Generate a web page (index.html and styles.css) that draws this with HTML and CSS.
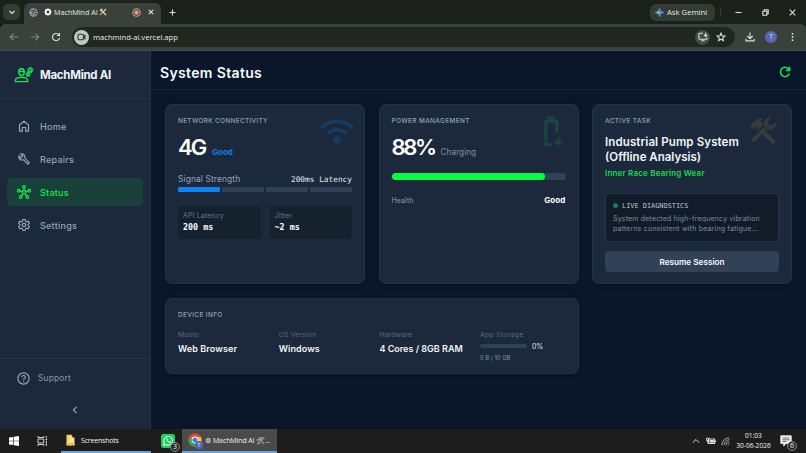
FILE: index.html
```html
<!DOCTYPE html>
<html lang="en">
<head>
    <meta charset="UTF-8">
    <meta name="viewport" content="width=device-width, initial-scale=1">
    <title>MachMind AI</title>
    <link rel="stylesheet" href="styles.css">
</head>
<body>
    <!-- Browser window -->
    <div class="tabs">
        <div class="tab-search"><svg width="8" height="8" viewBox="0 0 8 8"><path d="M1.5 3 4 5.4 6.5 3"/></svg></div>
        <div class="tab">
            <svg class="globe" width="9" height="9" viewBox="0 0 9 9"><circle cx="4.5" cy="4.5" r="4.2" fill="#9aa4ad"/><path d="M1 3.2 3.8 2.3 4.6 4 3 5.5 3.2 7.6M5.6 1 5.2 2.6 8 4M5.5 7.6 6 5.6 8 5.5" fill="none" stroke="#464c48"/></svg>
            <svg class="mark" width="8" height="8" viewBox="0 0 8 8"><circle cx="4" cy="4" r="2.3" fill="none" stroke="#fff" stroke-width="1.7"/><path d="M4 .3v7.4M.3 4h7.4M1.4 1.4l5.2 5.2M6.6 1.4 1.4 6.6" fill="none" stroke="#fff" stroke-width=".9"/><circle cx="4" cy="4" r="1.3" fill="#3a413a"/></svg>
            <span class="tab-title">MachMind AI</span>
            <svg class="tab-tools" width="8" height="8" viewBox="0 0 8 8"><path d="M1 7 5.5 2.5" stroke="#d99a45" stroke-width="1.3"/><path d="m2.2 2.2 4.8 4.8M1 2.8 3.2.8" stroke="#d8dde0" stroke-width="1.3"/><path d="m5 3 2-2" stroke="#e4c15f" stroke-width="1.5"/></svg>
            <svg class="rec" width="9" height="9" viewBox="0 0 9 9"><circle cx="4.5" cy="4.5" r="3.7" fill="none" stroke="#df9487"/><circle cx="4.5" cy="4.5" r="2.2" fill="#e59b8d" stroke="none"/></svg>
            <svg class="tab-close" width="6" height="6" viewBox="0 0 6 6"><path d="m.8.8 4.4 4.4M5.2.8.8 5.2"/></svg>
        </div>
        <svg class="new-tab" width="7" height="7" viewBox="0 0 7 7"><path d="M3.5.5v6M.5 3.5h6"/></svg>
        <div class="gemini">
            <svg width="9" height="9" viewBox="0 0 9 9"><path d="M4.5 0Q5 4 9 4.5 5 5 4.5 9 4 5 0 4.5 4 4 4.5 0" fill="#3c9cf0" stroke="#3c9cf0" stroke-width=".6"/><path d="M4.5 0Q5 3.2 6.5 3.8L4 4.2Q4.4 2 4.5 0" fill="#e8584b"/><path d="M0 4.5Q3 4.3 4 3.6L4.3 5.2Q2 5 0 4.5" fill="#dcb948"/></svg>
            <span>Ask Gemini</span>
        </div>
        <div class="window-buttons">
            <svg width="7" height="7" viewBox="0 0 7 7"><path d="M.5 3.5h6"/></svg>
            <svg width="7" height="7" viewBox="0 0 7 7"><path d="M.8 2.2h4v4h-4zM2.2 2.2V.8h4v4H4.8"/></svg>
            <svg width="7" height="7" viewBox="0 0 7 7"><path d="m.7.7 5.6 5.6M6.3.7.7 6.3"/></svg>
        </div>
    </div>
    <div class="toolbar">
        <div class="toolbar-nav">
            <svg class="dim" width="10" height="10" viewBox="0 0 10 10"><path d="M9 5H1.3M4.6 1.6 1.2 5l3.4 3.4"/></svg>
            <svg class="dim" width="10" height="10" viewBox="0 0 10 10"><path d="M1 5h7.7M5.4 1.6 8.8 5 5.4 8.4"/></svg>
            <svg width="10" height="10" viewBox="0 0 10 10"><path d="M8 3A3.6 3.6 0 1 0 8.6 5.8M8.5.9v2.6H5.9"/></svg>
        </div>
        <div class="address">
            <div class="site-info"><svg width="9" height="8" viewBox="0 0 9 8"><rect x="1" y="1.3" width="5.4" height="5.4" rx="1"/><path d="M6.5 3.4 8 2.4v3.2L6.5 4.6"/></svg></div>
            <span class="url">machmind-ai.vercel.app</span>
            <div class="install"><svg width="10" height="10" viewBox="0 0 10 10"><path d="M5 1.2H1.6a.7.7 0 0 0-.7.7v4.7c0 .4.3.7.7.7h6.8c.4 0 .7-.3.7-.7V5.4M3.3 8.8h3.4M7.7.7v3.6M6.1 2.9l1.6 1.6 1.6-1.6"/></svg></div>
            <svg class="star" width="10" height="10" viewBox="0 0 10 10"><path d="m5 1.2 1.1 2.6 2.8.2-2.1 1.9.6 2.8L5 7.2 2.6 8.7l.6-2.8L1.1 4l2.8-.2z"/></svg>
        </div>
        <svg class="download" width="10" height="10" viewBox="0 0 10 10"><path d="M5 .5v6M2.3 4 5 6.7 7.7 4M.9 6.7v2.2h8.2V6.7"/></svg>
        <span class="avatar">T</span>
        <svg class="dots" width="3" height="10" viewBox="0 0 3 10"><circle cx="1.5" cy="1.8" r=".9"/><circle cx="1.5" cy="5" r=".9"/><circle cx="1.5" cy="8.2" r=".9"/></svg>
    </div>

    <!-- MachMind app -->
    <div class="app">
        <aside class="sidebar">
            <div class="brand">
                <svg width="20" height="16" viewBox="0 0 20 16"><path d="M1.4 14.6v-1.4c0-1.3 1-1.9 2.2-2.3 2.2-.8 5.6-.8 7.8 0 1.2.4 2.2 1 2.2 2.3v1.4zM4.8 4.6v1a2.7 2.7 0 0 0 5.4 0v-1M4 4.5h7M4.9 4.3c0-1.3.7-2.3 1.6-2.5v1.3M10.1 4.3c0-1.3-.7-2.3-1.6-2.5v1.3M6.5 1.6h2"/><circle cx="16.3" cy="3.2" r="1.6"/><circle cx="14" cy="7.4" r="1.2"/><path stroke-dasharray="1 1.1" d="M16.3.6a2.6 2.6 0 1 1 0 5.2 2.6 2.6 0 0 1 0-5.2M14 5.3a2.1 2.1 0 1 1 0 4.2 2.1 2.1 0 0 1 0-4.2"/></svg>
                <span>MachMind AI</span>
            </div>
            <nav class="menu">
                <a class="menu-item">
                    <svg width="14" height="14" viewBox="0 0 14 14"><path d="M2.5 5.7 7 2.2l4.5 3.5v6.5H8.7V8.5H5.3v3.7H2.5z"/></svg>
                    <span>Home</span>
                </a>
                <a class="menu-item">
                    <svg width="14" height="14" viewBox="0 0 14 14"><path d="m7.9 6.3 4.4 4.4-1.5 1.5-4.5-4.5c-1.4.6-2.7.2-3.6-.7-.9-.9-1.1-2.1-.7-3.2l2 2 1.7-1.7-2-2c1.2-.4 2.5-.2 3.4.7.9 1 1.2 2.2.8 3.5z"/></svg>
                    <span>Repairs</span>
                </a>
                <a class="menu-item active">
                    <svg width="14" height="14" viewBox="0 0 14 14"><circle cx="7" cy="7.2" r="1.9"/><circle cx="7" cy="1.9" r="1.3"/><circle cx="1.7" cy="5.7" r="1.3"/><circle cx="12.3" cy="5.7" r="1.3"/><circle cx="3.7" cy="12" r="1.3"/><circle cx="10.3" cy="12" r="1.3"/><path d="M7 3.2v2.1M3 6l2.1.6M11 6l-2.1.6M4.5 11l1.3-2.1M9.5 11 8.2 8.9"/></svg>
                    <span>Status</span>
                </a>
                <a class="menu-item">
                    <svg width="14" height="14" viewBox="0 0 14 14"><path d="M5.9 1.5h2.2l.4 1.7 1.1.7 1.7-.6 1.1 1.9-1.3 1.2v1.2l1.3 1.2-1.1 1.9-1.7-.6-1.1.7-.4 1.7H5.9l-.4-1.7-1.1-.7-1.7.6-1.1-1.9 1.3-1.2V6.4L1.6 5.2l1.1-1.9 1.7.6 1.1-.7z"/><circle cx="7" cy="7" r="1.7"/></svg>
                    <span>Settings</span>
                </a>
            </nav>
            <div class="sidebar-bottom">
                <a class="support">
                    <svg width="13" height="13" viewBox="0 0 13 13"><circle cx="6.5" cy="6.5" r="5.6"/><path d="M4.9 5.2c0-1.1.7-1.7 1.7-1.7s1.7.6 1.7 1.5c0 1.3-1.7 1.4-1.7 2.8M6.6 8.8V10"/></svg>
                    <span>Support</span>
                </a>
                <svg class="collapse" width="8" height="8" viewBox="0 0 8 8"><path d="M5.6.8 2.4 4l3.2 3.2"/></svg>
            </div>
        </aside>

        <main class="main">
            <header class="page-header">
                <h1>System Status</h1>
                <svg width="12" height="12" viewBox="0 0 12 12"><path d="M9.8 3.2A4.6 4.6 0 1 0 10.4 7.4M10.6.7v3.7H6.9"/></svg>
            </header>
            <div class="cards">
                <section class="card">
                    <svg class="bg-icon wifi" width="36" height="27" viewBox="0 0 36 27"><path d="M2.2 9.8C11.5 1 24.5 1 33.8 9.8M8.5 15.8c5.6-5.2 13.4-5.2 19 0" fill="none" stroke="#163b62" stroke-width="3.6"/><circle cx="18" cy="22.2" r="3.8" fill="#163b62"/></svg>
                    <h2 class="network">NETWORK CONNECTIVITY</h2>
                    <div class="value"><b>4G</b><span class="good">Good</span></div>
                    <div class="signal-label"><span>Signal Strength</span><code>200ms Latency</code></div>
                    <div class="signal"><i class="on"></i><i></i><i></i><i></i></div>
                    <div class="metrics">
                        <div class="metric"><span>API Latency</span><code>200 ms</code></div>
                        <div class="metric"><span>Jitter</span><code>~2 ms</code></div>
                    </div>
                </section>

                <section class="card">
                    <svg class="bg-icon battery" width="22" height="32" viewBox="0 0 22 32"><path d="M9.3 28.4H3.8V5.5h11v11M6.8 5V2.2h5V5" fill="none" stroke="#19463f" stroke-width="3.2"/><path d="m18 20-7 7.2h4L14 32l7.2-7.2h-4z" fill="#19463f"/></svg>
                    <h2>POWER MANAGEMENT</h2>
                    <div class="value"><b class="percent">88%</b><span class="charging">Charging</span></div>
                    <div class="charge"><i style="width: 88%"></i></div>
                    <div class="health"><span>Health</span><b>Good</b></div>
                </section>

                <section class="card">
                    <svg class="bg-icon tools" width="28" height="28" viewBox="0 0 28 28"><g fill="#393a3b"><path d="m12.4 11.2 13.9 13.3-3.4 3.1L9 13.9zM0 9.2 7.4 1.8h5.2L10.2 4.2l3.4 3.3-5.4 5.4L5 9.6l-2.4 2.3z"/><path d="m14.4 10.1 2.3 2.5L4 25.4.9 22.3z"/><path d="M13.9 8.3c-.8-4.6 2.2-8 7.4-7.7L17.8 4.4l.8 3.4 3.5.8 4-3.7c.7 5.5-3.8 9-8.2 7.5z"/></g></svg>
                    <h2>ACTIVE TASK</h2>
                    <h3>Industrial Pump System<br><span>(Offline Analysis)</span></h3>
                    <p class="fault">Inner Race Bearing Wear</p>
                    <div class="diagnostics">
                        <code><i></i>LIVE DIAGNOSTICS</code>
                        <p>System detected high-frequency vibration<br>patterns consistent with bearing fatigue...</p>
                    </div>
                    <div class="resume">Resume Session</div>
                </section>

                <section class="card device">
                    <h2>DEVICE INFO</h2>
                    <div class="device-grid">
                        <div><span class="label">Model</span><b>Web Browser</b></div>
                        <div><span class="label">OS Version</span><b>Windows</b></div>
                        <div><span class="label">Hardware</span><b class="cores">4 Cores / 8GB RAM</b></div>
                        <div>
                            <span class="label wide">App Storage</span>
                            <div class="storage"><i></i><span>0%</span></div>
                            <small>0 B / 10 GB</small>
                        </div>
                    </div>
                </section>
            </div>
        </main>
    </div>

    <!-- Windows taskbar -->
    <footer class="taskbar">
        <svg class="start" width="10" height="10" viewBox="0 0 10 10" fill="#fff"><path d="m0 1.5 4.3-.6v3.8H0zM4.9.8 10 0v4.7H4.9zM0 5.3h4.3v3.8L0 8.5zM4.9 5.3H10V10l-5.1-.8z"/></svg>
        <svg class="task-view" width="11" height="10" viewBox="0 0 11 10"><path d="M1 0v1.5h5.7V0M1 3h5.7v4H1zM1 10V8.5h5.7V10M9.3 0v2M9.3 4.8V10"/><path d="M8.5 3.4h1.6" stroke-width="1.6"/></svg>
        <div class="task folder">
            <svg width="9" height="12" viewBox="0 0 9 12"><path d="M.5.8h5l1 2v8.4h-6z" fill="#f5d272"/><path d="M4.3 3.4h4.2v7.8H1.8z" fill="#fbe59c"/><path d="M.5 8.8h8v2.6h-8z" fill="#edbd50"/></svg>
            <span>Screenshots</span>
        </div>
        <div class="whatsapp">
            <svg width="14" height="14" viewBox="0 0 14 14"><rect width="14" height="14" rx="2.5" fill="#20cf5b"/><path d="m2.6 11.4.7-2.5a4.4 4.4 0 1 1 1.8 1.8z" fill="none" stroke="#fff"/><path d="M5.2 4.7c.3 2.2 2 3.9 4.1 4.2l.5-1.1-1.3-.8-.7.6c-.7-.3-1.2-.9-1.5-1.6l.5-.6-.6-1.3z" fill="#fff"/></svg>
            <span class="count">3</span>
        </div>
        <div class="task chrome">
            <div class="chrome-icon">
                <svg width="14" height="14" viewBox="0 0 14 14"><circle cx="7" cy="7" r="6.7" fill="#e94435"/><path d="M1.2 3.7A6.7 6.7 0 0 0 6.3 13.7L9.6 8.4 4 8.2z" fill="#2da94f"/><path d="M7 13.7A6.7 6.7 0 0 0 12.9 4H7l2.8 4.6z" fill="#fbc116"/><circle cx="7" cy="7" r="3.4" fill="#fff"/><circle cx="7" cy="7" r="2.6" fill="#3f7fee"/></svg>
                <span>T</span>
            </div>
            <span class="chrome-title">⚙ MachMind AI 🛠...</span>
        </div>
        <div class="tray">
            <svg width="8" height="8" viewBox="0 0 8 8"><path d="m.8 5.7 3.2-3.2 3.2 3.2"/></svg>
            <svg width="10" height="8" viewBox="0 0 10 8"><rect x="2.6" y="2" width="6" height="4.5"/><path d="M4 3.5h3.6v1.6H4z" fill="#ddd"/><path d="M9.4 3.3v2M.6 1.2h2.2v2.4H.6zM1.7 3.6v2.8"/></svg>
            <svg class="net" width="9" height="9" viewBox="0 0 9 9"><path d="M.8 8.2A7.5 7.5 0 0 1 8.3.8M2.9 8.2a5.4 5.4 0 0 1 5.4-5.4M5 8.2a3.3 3.3 0 0 1 3.3-3.3M7 8.2A1.4 1.4 0 0 1 8.3 7"/></svg>
            <div class="clock"><span>01:03</span><span>30-06-2026</span></div>
            <div class="notes">
                <svg width="12" height="12" viewBox="0 0 12 12"><path d="M.8.8h10.4v7.7H6L3.7 11V8.5H.8z" fill="#f4f4f4"/><path d="M2.5 3h7M2.5 4.8h7M2.5 6.6h4" stroke="#333" stroke-width=".7"/></svg>
                <span class="count">6</span>
            </div>
        </div>
    </footer>
</body>
</html>
```
FILE: styles.css
```css
* {
    box-sizing: border-box;
}
body {
    margin: 0;
    height: 453px;
    overflow: hidden;
    display: flex;
    flex-direction: column;
    font-family: "Open Sans", "Noto Sans", sans-serif;
    font-size: 8px;
    color: #e8eaed;
    background-color: #0a172b;
}
svg {
    display: block;
    flex: none;
}
span {
    white-space: nowrap;
}
h1, h2, h3, p {
    margin: 0;
}

/* Browser */
.tabs {
    height: 24px;
    flex: none;
    display: flex;
    align-items: center;
    background-color: #1b201b;
}
.tabs svg, .toolbar svg {
    fill: none;
    stroke: #dce1dc;
    stroke-width: 1.1;
}
.tabs .globe, .tabs .mark, .gemini svg {
    stroke: none;
}
.tab-search {
    width: 17px;
    height: 16px;
    margin-left: 3px;
    border-radius: 5px;
    display: flex;
    align-items: center;
    justify-content: center;
    background-color: #343a34;
}
.tab {
    width: 137px;
    height: 21px;
    margin: 3px 0 0 4px;
    padding: 0 7px 3px 5px;
    display: flex;
    align-items: center;
    border-radius: 6px 6px 0 0;
    background-color: #3a413a;
}
.mark {
    margin-left: 6px;
}
.tab-title {
    margin-left: 2px;
    width: 43px;
    font-size: 7.2px;
}
.tab-tools {
    margin-left: 2px;
}
.rec {
    margin-left: auto;
}
.tab-close {
    margin-left: 7px;
}
.new-tab {
    margin-left: 8px;
}
.gemini {
    width: 65px;
    height: 17px;
    margin-left: auto;
    padding-left: 5px;
    display: flex;
    align-items: center;
    gap: 3px;
    border-radius: 6px;
    background-color: #343a34;
    font-size: 7.7px;
}
.window-buttons {
    display: flex;
    gap: 20px;
    margin-left: 5px;
    padding: 1px 10px 1px 14px;
    border-left: 1px solid #343a34;
}
.toolbar {
    height: 27px;
    flex: none;
    display: flex;
    align-items: center;
    background-color: #3a413a;
    border-bottom: 1px solid #484e48;
    border-radius: 5px 5px 0 0;
}
.toolbar-nav {
    display: flex;
    gap: 11px;
    padding-left: 9px;
}
.toolbar .dim {
    stroke: #7e857e;
}
.address {
    width: 663px;
    height: 20px;
    margin-left: 11px;
    padding: 0 9px 0 2px;
    display: flex;
    align-items: center;
    border-radius: 10px;
    background-color: #212621;
}
.site-info {
    width: 15px;
    height: 15px;
    border-radius: 50%;
    display: flex;
    align-items: center;
    justify-content: center;
    background-color: #bdcbbd;
}
.site-info svg {
    stroke: #303a30;
}
.url {
    margin-left: 4px;
    font-size: 7.6px;
}
.install {
    width: 15px;
    height: 15px;
    margin-left: auto;
    border-radius: 50%;
    display: flex;
    align-items: center;
    justify-content: center;
    background-color: #454b45;
}
.star {
    margin-left: 6px;
}
.download {
    margin-left: 10px;
}
.avatar {
    width: 12px;
    height: 12px;
    margin-left: 10px;
    border-radius: 50%;
    background-color: #5667b5;
    font-size: 6.5px;
    line-height: 12px;
    text-align: center;
}
.dots {
    margin-left: 14px;
}
.toolbar .dots {
    fill: #dce1dc;
    stroke: none;
}

/* App shell */
.app {
    flex: 1;
    min-height: 0;
    display: flex;
    font-family: Inter, sans-serif;
}
.sidebar {
    width: 151px;
    flex: none;
    display: flex;
    flex-direction: column;
    background-color: #1c293c;
    border-right: 1px solid #223248;
}
.brand {
    height: 48px;
    padding-left: 14px;
    display: flex;
    align-items: center;
    gap: 6px;
    border-bottom: 1px solid #233347;
    font-size: 11.5px;
    font-weight: 700;
    letter-spacing: -0.28px;
    color: #f1f5f9;
}
.brand svg {
    fill: none;
    stroke: #19e453;
    stroke-width: 1.4;
}
.menu {
    padding: 13px 7px;
    display: flex;
    flex-direction: column;
    gap: 5px;
}
.menu-item {
    height: 28px;
    padding-left: 10px;
    display: flex;
    align-items: center;
    gap: 9px;
    border-radius: 5px;
    font-size: 9px;
    font-weight: 500;
    letter-spacing: 0.25px;
    color: #94a3b8;
}
.menu-item svg, .support svg, .collapse {
    fill: none;
    stroke: #94a3b8;
    stroke-width: 1.2;
}
.menu-item.active {
    background-color: #194039;
    color: #10ee4b;
}
.menu-item.active svg {
    stroke: #10ee4b;
}
.sidebar-bottom {
    margin-top: auto;
    height: 71px;
    border-top: 1px solid #26364a;
}
.support {
    height: 38px;
    padding-left: 17px;
    display: flex;
    align-items: center;
    gap: 8px;
    font-size: 8.5px;
    letter-spacing: 0.1px;
    color: #8795aa;
}
.collapse {
    margin: 9px auto 0;
}
.main {
    flex: 1;
    background-color: #0a172b;
}
.page-header {
    height: 39px;
    padding: 4px 15px 0 9px;
    display: flex;
    align-items: center;
    justify-content: space-between;
    border-bottom: 1px solid #16253a;
}
.page-header h1 {
    font-size: 14px;
    font-weight: 600;
    letter-spacing: 0.35px;
    color: #f8fafc;
}
.page-header svg {
    fill: none;
    stroke: #11e34c;
    stroke-width: 1.6;
}

/* Cards */
.cards {
    padding: 14px;
    display: grid;
    grid-template-columns: repeat(3, 200px);
    grid-template-rows: 180px 76px;
    gap: 14px 13.5px;
}
.card {
    position: relative;
    padding: 11px 12px;
    border: 1px solid #223247;
    border-radius: 7px;
    background-color: #1c293c;
    box-shadow: 0 2px 4px rgba(0, 0, 0, 0.15);
}
.card h2 {
    height: 10px;
    font-size: 6.4px;
    line-height: 11px;
    font-weight: 500;
    letter-spacing: 0.4px;
    white-space: nowrap;
    color: #94a3b8;
}
.card .network {
    letter-spacing: 0.34px;
}
.bg-icon {
    position: absolute;
}
.wifi {
    top: 13px;
    right: 9px;
}
.battery {
    top: 11px;
    right: 14px;
}
.tools {
    top: 12px;
    right: 13px;
}
.value {
    height: 32px;
    padding-top: 5px;
    display: flex;
    align-items: baseline;
    color: #fff;
}
.value b {
    width: 27px;
    font-size: 22px;
    line-height: 32px;
    font-weight: 600;
    letter-spacing: -1.8px;
}
.value .percent {
    width: 42px;
    letter-spacing: -2.3px;
}
.value span {
    margin-left: 7px;
    font-size: 8px;
}
.value .good {
    color: #0d7fe8;
    font-weight: 700;
}
.value .charging {
    font-size: 8.3px;
    color: #7f8da3;
}
code {
    font-family: "DejaVu Sans Mono", monospace;
    white-space: nowrap;
}
.signal-label {
    height: 12px;
    margin-top: 15px;
    display: flex;
    align-items: center;
    justify-content: space-between;
    font-size: 8.4px;
    letter-spacing: 0.13px;
    color: #94a3b8;
}
.signal-label code {
    font-size: 7.8px;
    letter-spacing: 0;
    color: #e2e8f0;
}
.signal {
    display: grid;
    grid-template-columns: repeat(4, 1fr);
    gap: 2px;
    margin-top: 2px;
}
.signal i {
    height: 5px;
    border-radius: 1px;
    background-color: #314257;
}
.signal .on {
    background-color: #0d84f1;
}
.metrics {
    display: grid;
    grid-template-columns: 1fr 1fr;
    gap: 9px;
    margin-top: 14px;
}
.metric {
    height: 33px;
    padding: 4px 5px;
    display: flex;
    flex-direction: column;
    border-radius: 4px;
    background-color: #16212e;
}
.metric span {
    font-size: 6.9px;
    line-height: 11px;
    letter-spacing: 0.2px;
    color: #66758b;
}
.metric code {
    font-size: 8.4px;
    line-height: 13px;
    font-weight: 700;
    color: #f8fafc;
}
.charge {
    height: 7px;
    margin-top: 15px;
    border-radius: 4px;
    background-color: #314257;
}
.charge i {
    display: block;
    height: 7px;
    border-radius: 4px;
    background-color: #05fc42;
}
.health {
    height: 12px;
    margin-top: 14px;
    display: flex;
    align-items: center;
    justify-content: space-between;
    font-size: 7px;
    letter-spacing: 0.1px;
    color: #8c9bb0;
}
.health b {
    font-size: 8px;
    color: #fff;
}
.card h3 {
    margin-top: 9px;
    font-size: 11.5px;
    line-height: 15px;
    font-weight: 600;
    letter-spacing: 0.11px;
    white-space: nowrap;
    color: #f1f5f9;
}
.card h3 span {
    letter-spacing: 0;
}
.fault {
    font-size: 8px;
    line-height: 12px;
    margin-top: 2px;
    font-weight: 600;
    letter-spacing: 0.19px;
    color: #17d94f;
}
.diagnostics {
    height: 49px;
    margin-top: 14px;
    padding: 5px 7px;
    border: 1px solid #263447;
    border-radius: 5px;
    background-color: #121c28;
}
.diagnostics code {
    display: flex;
    align-items: center;
    height: 13px;
    font-size: 6.9px;
    color: #b7c4d3;
}
.diagnostics i {
    width: 5px;
    height: 5px;
    margin-right: 4px;
    border-radius: 50%;
    background-color: #10805f;
}
.diagnostics p {
    margin-top: 2px;
    font-size: 7px;
    line-height: 9.5px;
    letter-spacing: 0.18px;
    white-space: nowrap;
    color: #7e8da2;
}
.resume {
    height: 21px;
    margin-top: 9px;
    border-radius: 4px;
    font-size: 8.2px;
    line-height: 22px;
    font-weight: 600;
    text-align: center;
    color: #f1f5f9;
    background-color: #314257;
}
.device {
    grid-column: span 2;
}
.device-grid {
    display: grid;
    grid-template-columns: repeat(4, 100.7px);
    margin-top: 9px;
}
.label {
    display: block;
    font-size: 6.8px;
    line-height: 11px;
    letter-spacing: 0.2px;
    color: #586880;
}
.label.wide {
    letter-spacing: 0.34px;
}
.device-grid b {
    display: block;
    margin-top: 2px;
    font-size: 9px;
    line-height: 13px;
    font-weight: 600;
    letter-spacing: 0.1px;
    white-space: nowrap;
    color: #f1f5f9;
}
.device-grid .cores {
    letter-spacing: 0;
}
.storage {
    height: 12px;
    display: flex;
    align-items: center;
    gap: 5px;
    font-size: 7px;
    letter-spacing: -0.3px;
    color: #e2e8f0;
}
.storage i {
    width: 47px;
    height: 4px;
    border-radius: 2px;
    background-color: #314257;
}
.device-grid small {
    display: block;
    font-size: 5.8px;
    line-height: 11px;
    color: #8795aa;
}

/* Taskbar */
.taskbar {
    height: 24px;
    flex: none;
    display: flex;
    align-items: center;
    background-color: #1d1d1e;
    color: #f3f3f3;
    font-size: 7px;
}
.start {
    margin-left: 9px;
}
.task-view {
    margin-left: 18px;
    fill: none;
    stroke: #d2d2d2;
}
.task {
    height: 24px;
    display: flex;
    align-items: center;
    border-bottom: 2px solid #66a3d8;
}
.folder {
    width: 90px;
    margin-left: 13px;
    padding-left: 5px;
    gap: 6px;
    letter-spacing: -0.2px;
}
.whatsapp {
    position: relative;
    margin-left: 10px;
}
.count {
    position: absolute;
    right: -5px;
    bottom: -4px;
    width: 10px;
    height: 10px;
    border: 1px solid #888;
    border-radius: 50%;
    background-color: #2a2a2a;
    font-size: 7px;
    line-height: 8px;
    text-align: center;
}
.chrome {
    width: 95px;
    margin-left: 7px;
    padding-left: 6px;
    gap: 3px;
    background-color: #4a4a4b;
}
.chrome-icon {
    position: relative;
}
.chrome-icon span {
    position: absolute;
    right: -1px;
    bottom: -2px;
    width: 8px;
    height: 8px;
    border-radius: 50%;
    background-color: #5667b5;
    font-size: 5px;
    line-height: 8px;
    text-align: center;
}
.chrome-title {
    font-family: "Open Sans", "Noto Sans", "DejaVu Sans", sans-serif;
    letter-spacing: -0.1px;
}
.tray {
    margin-left: auto;
    padding-right: 14px;
    display: flex;
    align-items: center;
    gap: 6px;
}
.tray svg {
    fill: none;
    stroke: #ddd;
}
.tray .net {
    margin-left: -1px;
    stroke: #aaa;
}
.clock {
    width: 35px;
    display: flex;
    flex-direction: column;
    align-items: center;
    line-height: 10px;
    font-size: 6.6px;
}
.notes {
    position: relative;
    margin-left: 3px;
}
```
